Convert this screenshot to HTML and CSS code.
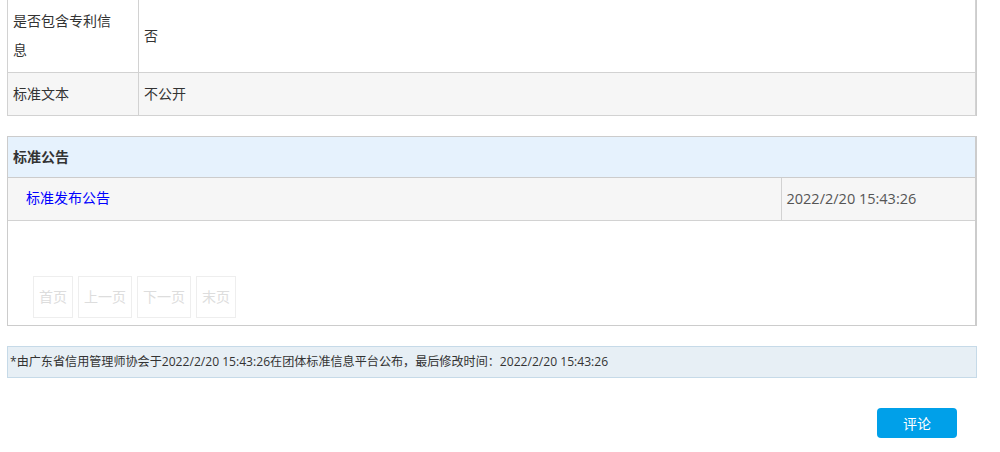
FILE: index.html
```html
<!DOCTYPE html>
<html lang="zh-CN">
<head>
  <meta charset="UTF-8" />
  <title>标准信息</title>
  <link rel="stylesheet" href="styles.css">
</head>
<body>
  <div class="page">
    <div class="info-box">
      <table class="info">
        <tr class="tall">
          <td class="label">是否包含专利信息</td>
          <td>否</td>
        </tr>
        <tr class="alt">
          <td class="label">标准文本</td>
          <td>不公开</td>
        </tr>
      </table>
    </div>

    <div class="panel">
      <div class="panel-title">标准公告</div>
      <table class="notice">
        <tr>
          <td class="notice-name"><a href="#">标准发布公告</a></td>
          <td class="notice-date">2022/2/20 15:43:26</td>
        </tr>
      </table>
      <div class="pager">
        <span class="page-btn">首页</span>
        <span class="page-btn">上一页</span>
        <span class="page-btn">下一页</span>
        <span class="page-btn">末页</span>
      </div>
    </div>

    <div class="note">*由广东省信用管理师协会于2022/2/20 15:43:26在团体标准信息平台公布，最后修改时间：2022/2/20 15:43:26</div>

    <div class="actions">
      <button class="comment-btn">评论</button>
    </div>
  </div>
</body>
</html>
```

FILE: styles.css
```css
* { box-sizing: border-box; }
body {
  margin: 0;
  background: #fff;
  font-family: "Open Sans", "Noto Sans CJK SC", sans-serif;
  font-size: 14px;
  color: #333;
}
.page {
  width: 970px;
  margin: -1px 0 0 7px;
}
.info-box {
  border-right: 1px solid #ccc;
}
.info {
  width: 100%;
  border-collapse: collapse;
  table-layout: fixed;
}
.info td {
  border: 1px solid #d2d2d2;
  padding: 7px 5px;
  line-height: 28px;
  vertical-align: middle;
}
.info .tall td {
  line-height: 29px;
  padding: 6px 5px 8px;
}
.info .tall .label { padding-right: 18px; }
.info .label {
  width: 131px;
  padding-right: 18px;
}
.info .alt td { background: #f6f6f6; }

.panel {
  margin-top: 20px;
  border: 1px solid #ccc;
  border-right-width: 2px;
}
.panel-title {
  height: 41px;
  line-height: 40px;
  padding-left: 5px;
  background: #e6f2fd;
  border-bottom: 1px solid #ccc;
  font-weight: bold;
}
.notice {
  width: 100%;
  border-collapse: collapse;
  background: #f6f6f6;
  border-bottom: 1px solid #d2d2d2;
}
.notice td {
  height: 42px;
  padding: 0;
}
.notice-name {
  padding: 0 0 4px 18px !important;
}
.notice-name a {
  color: #0000ff;
  text-decoration: none;
}
.notice-date {
  width: 194px;
  border-left: 1px solid #d2d2d2;
  padding-left: 5px !important;
  color: #555;
  font-size: 14.5px;
}
.pager {
  display: flex;
  gap: 5px;
  padding: 55px 0 7px 25px;
}
.page-btn {
  height: 42px;
  line-height: 40px;
  padding: 0 5px;
  border: 1px solid #eee;
  color: #ddd;
}

.note {
  margin-top: 20px;
  height: 32px;
  line-height: 30px;
  padding-left: 2px;
  background: #e7eff5;
  border: 1px solid #c6dae8;
  font-size: 12.1px;
  color: #333;
}
.actions {
  display: flex;
  justify-content: flex-end;
  padding: 30px 20px 0 0;
}
.comment-btn {
  width: 80px;
  height: 30px;
  border: none;
  border-radius: 4px;
  background: #00a0e9;
  color: #fff;
  font-family: "Noto Sans CJK SC", sans-serif;
  font-size: 14px;
  cursor: pointer;
}
```
